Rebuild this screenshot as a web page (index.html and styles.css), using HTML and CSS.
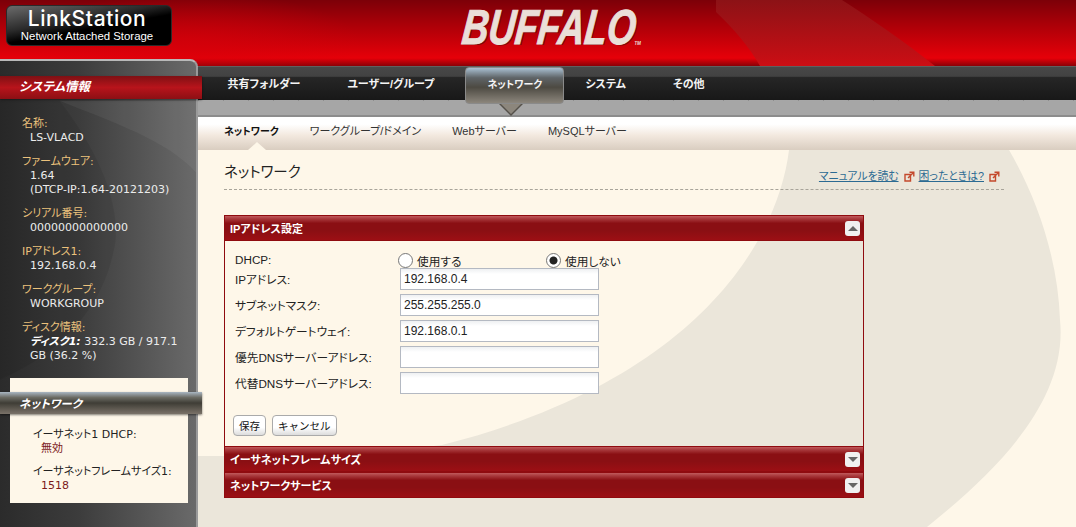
FILE: index.html
```html
<!DOCTYPE html>
<html lang="ja">
<head>
    <meta charset="UTF-8">
    <title>LinkStation - ネットワーク</title>
    <link rel="stylesheet" href="styles.css">
</head>
<body>
    <header class="top">
        <svg class="top-swoosh" viewBox="0 0 1076 66" preserveAspectRatio="none">
            <defs>
                <linearGradient id="band" x1="0" y1="0" x2="0" y2="1">
                    <stop offset="0" stop-color="#8c1216"/>
                    <stop offset="1" stop-color="#cc0e14"/>
                </linearGradient>
            </defs>
            <path d="M716 12 C735 30 750 48 760 66 L935 66 C905 42 870 18 842 0 L716 0 Z" fill="url(#band)"/>
        </svg>
        <div class="product">
            <div class="product-name">LinkStation</div>
            <div class="product-sub">Network Attached Storage</div>
        </div>
        <div class="brand">BUFFALO<span class="tm">TM</span></div>
    </header>

    <div class="page">
        <aside class="sidebar">
            <svg class="side-swoosh" viewBox="0 0 198 468" preserveAspectRatio="none">
                <path d="M60 40 C110 60 170 80 198 112 L198 40 Z" fill="#ffffff" opacity="0.05"/>
                <path d="M0 40 L60 40 C100 90 125 150 115 190 C105 240 70 290 0 320 Z" fill="#000000" opacity="0.07"/>
            </svg>
            <h2 class="side-title">システム情報</h2>
            <dl class="info">
                <dt>名称:</dt>
                <dd>LS-VLACD</dd>
                <dt>ファームウェア:</dt>
                <dd>1.64<br>(DTCP-IP:1.64-20121203)</dd>
                <dt>シリアル番号:</dt>
                <dd>00000000000000</dd>
                <dt>IPアドレス1:</dt>
                <dd>192.168.0.4</dd>
                <dt>ワークグループ:</dt>
                <dd>WORKGROUP</dd>
                <dt>ディスク情報:</dt>
                <dd><b>ディスク1:</b> 332.3 GB / 917.1 GB (36.2 %)</dd>
            </dl>
            <section class="side-box">
                <h2 class="side-title side-title-gray">ネットワーク</h2>
                <dl class="info info-light">
                    <dt>イーサネット1 DHCP:</dt>
                    <dd>無効</dd>
                    <dt>イーサネットフレームサイズ1:</dt>
                    <dd>1518</dd>
                </dl>
            </section>
        </aside>

        <div class="content">
            <nav class="nav">
                <a class="nav-item">共有フォルダー</a>
                <a class="nav-item">ユーザー/グループ</a>
                <a class="nav-item active">ネットワーク</a>
                <a class="nav-item">システム</a>
                <a class="nav-item">その他</a>
            </nav>
            <div class="band"></div>
            <nav class="subnav">
                <a class="sub-item current">ネットワーク</a>
                <a class="sub-item">ワークグループ/ドメイン</a>
                <a class="sub-item">Webサーバー</a>
                <a class="sub-item">MySQLサーバー</a>
            </nav>

            <main class="main">
                <svg class="main-swoosh" viewBox="0 0 878 377" preserveAspectRatio="none">
                    <path d="M591 0 C580 90 500 230 244 295 C170 305 70 306 0 306 L0 377 L729 377 C800 320 870 250 862 170 C860 110 840 50 811 0 Z" fill="#ebe6da"/>
                </svg>

                <div class="title-row">
                    <h1>ネットワーク</h1>
                    <div class="help">
                        <a>マニュアルを読む</a>
                        <svg class="ext" viewBox="0 0 11 11"><path d="M1 3.5H6.5V10H1Z M4 7 L9 2 M5.5 1.2H9.8V5.5" fill="none" stroke="#c4492c" stroke-width="1.4"/></svg>
                        <a>困ったときは?</a>
                        <svg class="ext" viewBox="0 0 11 11"><path d="M1 3.5H6.5V10H1Z M4 7 L9 2 M5.5 1.2H9.8V5.5" fill="none" stroke="#c4492c" stroke-width="1.4"/></svg>
                    </div>
                </div>

                <div class="panel">
                    <div class="panel-head">
                        <span>IPアドレス設定</span>
                        <button class="toggle up"></button>
                    </div>
                    <form class="panel-body">
                        <div class="row row-radio">
                            <label class="field">DHCP:</label>
                            <label class="choice first"><input type="radio" name="dhcp">使用する</label>
                            <label class="choice"><input type="radio" name="dhcp" checked>使用しない</label>
                        </div>
                        <div class="row">
                            <label class="field">IPアドレス:</label>
                            <input class="text" type="text" value="192.168.0.4">
                        </div>
                        <div class="row">
                            <label class="field">サブネットマスク:</label>
                            <input class="text" type="text" value="255.255.255.0">
                        </div>
                        <div class="row">
                            <label class="field">デフォルトゲートウェイ:</label>
                            <input class="text" type="text" value="192.168.0.1">
                        </div>
                        <div class="row">
                            <label class="field">優先DNSサーバーアドレス:</label>
                            <input class="text" type="text">
                        </div>
                        <div class="row">
                            <label class="field">代替DNSサーバーアドレス:</label>
                            <input class="text" type="text">
                        </div>
                        <div class="buttons">
                            <button class="btn" type="button">保存</button>
                            <button class="btn" type="button">キャンセル</button>
                        </div>
                    </form>
                    <div class="panel-head">
                        <span>イーサネットフレームサイズ</span>
                        <button class="toggle down"></button>
                    </div>
                    <div class="panel-head">
                        <span>ネットワークサービス</span>
                        <button class="toggle down"></button>
                    </div>
                </div>
            </main>
        </div>
    </div>
</body>
</html>
```

FILE: styles.css
```css
html, body {
    height: 100%;
    margin: 0;
    overflow: hidden;
}

body {
    display: flex;
    flex-direction: column;
    font-family: "Liberation Sans", "Noto Sans CJK JP", sans-serif;
    font-feature-settings: "palt";
    font-size: 12px;
    color: #222;
    background-color: #fef7e9;
}

h1, h2, dl, dd {
    margin: 0;
}

/* top red bar */
.top {
    height: 66px;
    flex: none;
    position: relative;
    z-index: 3;
    display: flex;
    background:
        radial-gradient(ellipse 170px 50px at 190px 42px, rgba(215, 0, 10, 0.6), transparent),
        linear-gradient(to bottom, #7c0008 0%, #a80008 35%, #e60009 88%, #8a0006 100%);
    box-sizing: border-box;
    padding: 5px 0 0 6px;
}

.top-swoosh {
    position: absolute;
    top: 0;
    left: 0;
    width: 100%;
    height: 100%;
}

.product {
    position: relative;
    width: 166px;
    height: 41px;
    box-sizing: border-box;
    padding-right: 4px;
    border-radius: 6px;
    border: 1px solid #2a2a2a;
    background: linear-gradient(170deg, #6b6b6b 0%, #2a2a2a 38%, #000 55%);
    color: #fff;
    text-align: center;
}

.product-name {
    font-family: "Inter", sans-serif;
    font-weight: 500;
    font-size: 21px;
    letter-spacing: 0.6px;
    line-height: 22px;
    margin-top: 2px;
}

.product-sub {
    font-size: 11.4px;
    line-height: 12px;
}

.brand {
    position: absolute;
    left: 458px;
    top: 0;
    width: 240px;
    transform: skewX(-6deg) scaleX(0.75);
    transform-origin: left bottom;
    font-weight: bold;
    font-style: italic;
    font-size: 49px;
    line-height: 54px;
    -webkit-text-stroke: 1px #eadfd8;
    color: #eadfd8;
    text-shadow: 2px 1px 0 #7a0a0c;
}

.tm {
    font-size: 6px;
    font-style: normal;
    -webkit-text-stroke: 0;
    text-shadow: none;
    vertical-align: -1px;
}

.page {
    flex: 1;
    display: flex;
    min-height: 0;
}

/* left column */
.sidebar {
    width: 198px;
    flex: none;
    margin-top: -7px;
    position: relative;
    z-index: 4;
    box-sizing: border-box;
    padding-top: 15px;
    border-top: 2px solid #b9b9b9;
    border-right: 2px solid #9a9a9a;
    border-top-right-radius: 8px;
    background: linear-gradient(to right, #2b2b2b, #3c3c3c 40%, #6a6a6a);
}

.side-swoosh {
    position: absolute;
    top: 0;
    left: 0;
    width: 100%;
    height: 100%;
}

.side-title {
    position: relative;
    width: 202px;
    height: 23px;
    box-sizing: border-box;
    padding-left: 19px;
    font-size: 12.5px;
    line-height: 23px;
    font-weight: bold;
    font-style: italic;
    color: #fff;
    background: linear-gradient(to bottom, #7f1014, #b8141b 50%, #8c0f14);
    box-shadow: 0 1px 2px rgba(0, 0, 0, 0.5);
}

.info {
    position: relative;
    padding: 18px 10px 0 22px;
    font-family: "DejaVu Sans", "Noto Sans CJK JP", sans-serif;
    font-size: 11px;
    line-height: 14px;
    height: 279px;
    box-sizing: border-box;
}

.info dt {
    color: #ecc27c;
}

.info dd {
    color: #ececec;
    padding-left: 8px;
    margin-bottom: 10px;
    margin-right: -8px;
}

.info b {
    color: #fff;
    font-style: italic;
}

.side-box {
    position: relative;
    width: 178px;
    height: 125px;
    margin-left: 10px;
    padding-top: 14px;
    box-sizing: border-box;
    background-color: #fef7e9;
}

.side-title-gray {
    margin-left: -10px;
    height: 22px;
    font-size: 11.5px;
    line-height: 25px;
    background: linear-gradient(to bottom, #a9b6c2 0, #6b6b63 25%, #3f3d36 50%, #7a7268 100%);
}

.info-light {
    padding: 14px 0 0 23px;
    height: auto;
}

.info-light dt {
    color: #222;
}

.info-light dd {
    color: #7c1a1c;
    margin-bottom: 9px;
}

/* right column */
.content {
    flex: 1;
    display: flex;
    flex-direction: column;
    min-width: 0;
}

.nav {
    height: 34px;
    flex: none;
    display: flex;
    box-sizing: border-box;
    padding-left: 6px;
    border-top: 1px solid #5f5f5f;
    background: linear-gradient(to bottom, #484848 0, #424242 28%, #262626 32%, #181818 100%);
}

.nav-item {
    position: relative;
    padding: 0 23.5px;
    line-height: 34px;
    font-size: 11px;
    font-weight: bold;
    color: #f4f4f4;
    white-space: nowrap;
}

.nav-item.active {
    width: 99px;
    height: 37px;
    margin: 0 -2.5px 0 7.5px;
    padding: 0;
    box-sizing: border-box;
    text-align: center;
    font-size: 10px;
    z-index: 2;
    border-radius: 4px;
    border: 1px solid #8a8a8a;
    background: linear-gradient(to bottom, #a9c0d2 0, #5f6467 28%, #4d4a42 55%, #8c867c 100%);
}

.nav-item.active::before,
.nav-item.active::after {
    content: "";
    position: absolute;
    left: 33px;
    top: 36px;
    border-left: 12px solid transparent;
    border-right: 12px solid transparent;
    border-top: 12px solid #55514a;
}

.nav-item.active::after {
    left: 35px;
    top: 36px;
    border-left-width: 10px;
    border-right-width: 10px;
    border-top: 10px solid #8c867c;
}

.band {
    height: 17px;
    flex: none;
    box-sizing: border-box;
    border-bottom: 2px solid #8c8c8c;
    background:
        repeating-linear-gradient(to right, #8e8e8e 0, #8e8e8e 1px, transparent 1px, transparent 25px) top left / 100% 1px no-repeat,
        #a6a6a6;
}

.subnav {
    height: 33px;
    flex: none;
    position: relative;
    display: flex;
    box-sizing: border-box;
    padding-left: 26px;
    gap: 31px;
    background: linear-gradient(to bottom, #fff 0, #fff 22%, #f3e9df 55%, #d9cdc0 100%);
}

.sub-item {
    position: relative;
    line-height: 29px;
    font-size: 11px;
    color: #333;
    white-space: nowrap;
}

.sub-item.current {
    font-size: 10px;
    font-weight: bold;
    color: #111;
}

.sub-item.current::after {
    content: "";
    position: absolute;
    left: 24px;
    bottom: 0;
    border-left: 9px solid transparent;
    border-right: 9px solid transparent;
    border-bottom: 8px solid #fef7e9;
}

.main {
    flex: 1;
    position: relative;
    min-height: 0;
    padding: 0 72px 0 26px;
}

.main-swoosh {
    position: absolute;
    top: 0;
    left: 0;
    width: 100%;
    height: 100%;
}

.title-row {
    position: relative;
    height: 40px;
    display: flex;
    justify-content: space-between;
    align-items: flex-end;
    box-sizing: border-box;
    border-bottom: 1px dashed #a8a49a;
}

.title-row h1 {
    align-self: flex-start;
    margin-top: 12px;
    font-size: 14.5px;
    line-height: 20px;
    font-weight: normal;
    color: #222;
}

.help {
    display: flex;
    align-items: center;
    height: 16px;
    margin-bottom: 5px;
    font-size: 10.8px;
    line-height: 14px;
    color: #2c6a92;
}

.help a {
    text-decoration: underline;
    white-space: nowrap;
}

.ext {
    width: 11px;
    height: 11px;
    margin: 0 4px 0 5px;
}

.panel {
    position: relative;
    width: 640px;
    margin-top: 25px;
}

.panel-head {
    height: 26px;
    display: flex;
    justify-content: space-between;
    align-items: center;
    box-sizing: border-box;
    padding: 0 3px 0 5px;
    border: 1px solid #8f0b0f;
    background: linear-gradient(to bottom, #c05a5c 0, #a8383b 12%, #8a0f13 30%, #8a0f13 60%, #9c0f14 100%);
}

.panel-head span {
    padding-bottom: 1px;
    font-size: 11px;
    font-weight: bold;
    color: #fff;
}

.toggle {
    width: 15px;
    height: 15px;
    padding: 0;
    display: flex;
    align-items: center;
    justify-content: center;
    border: none;
    border-radius: 3px;
    background-color: #f0f0f0;
}

.toggle::before {
    content: "";
    border-left: 5px solid transparent;
    border-right: 5px solid transparent;
}

.toggle.up::before {
    border-bottom: 5px solid #666;
}

.toggle.down::before {
    border-top: 5px solid #666;
}

.panel-body {
    height: 205px;
    box-sizing: border-box;
    padding: 11px 10px 0;
    border-left: 1px solid #8f0b0f;
    border-right: 1px solid #8f0b0f;
}

.row {
    display: flex;
    align-items: center;
    height: 22px;
    margin-bottom: 4px;
}

.row-radio {
    height: 16px;
    margin-bottom: 0;
}

.field {
    width: 165px;
    flex: none;
    box-sizing: border-box;
    padding-bottom: 2px;
    white-space: nowrap;
    font-size: 11.7px;
}

.choice {
    display: flex;
    align-items: center;
    gap: 4px;
    font-size: 11.7px;
}

.choice.first {
    width: 148px;
    margin-left: -2px;
}

.choice input {
    appearance: none;
    width: 15px;
    height: 15px;
    margin: 0;
    border: 1px solid #777;
    border-radius: 50%;
    background: #fff;
}

.choice input:checked {
    background: radial-gradient(circle, #222 0, #222 3.5px, #fff 4.5px);
}

.text {
    width: 199px;
    height: 22px;
    box-sizing: border-box;
    padding: 0 3px;
    font-family: inherit;
    font-size: 12px;
    color: #222;
    border: 1px solid #b4b9c2;
    background: linear-gradient(to bottom, #eef0f2 0, #fff 25%);
}

.buttons {
    display: flex;
    gap: 6px;
    margin: 21px 0 0 -2px;
}

.btn {
    height: 21px;
    padding: 0 5px;
    font-family: inherit;
    font-size: 10.5px;
    color: #111;
    border: 1px solid #aaa;
    border-radius: 4px;
    background: linear-gradient(to bottom, #fff 0, #fff 60%, #dcdcdc 100%);
}
```
